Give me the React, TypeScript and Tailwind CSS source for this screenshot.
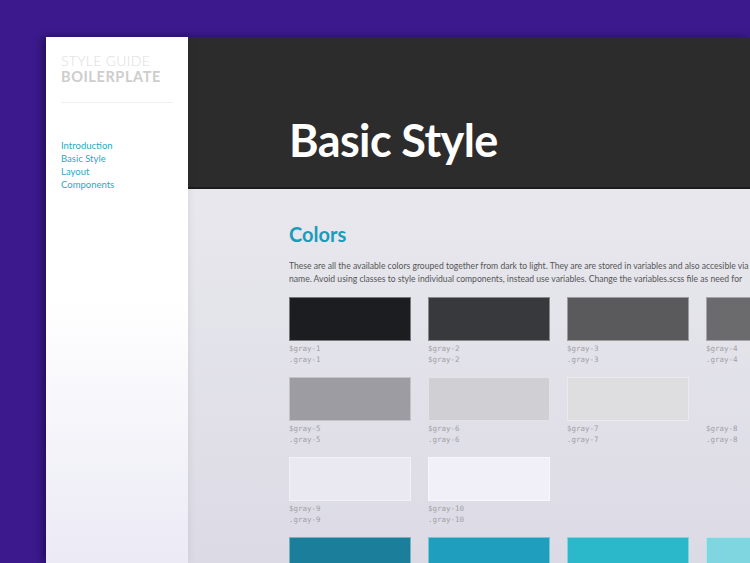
import React from 'react';

interface Swatch {
    name: string;
    cls: string;
    color: string | null;
}

const swatches: Swatch[] = [
    { name: '$gray-1', cls: '.gray-1', color: '#1c1d20' },
    { name: '$gray-2', cls: '$gray-2', color: '#38393c' },
    { name: '$gray-3', cls: '.gray-3', color: '#5a5a5d' },
    { name: '$gray-4', cls: '.gray-4', color: '#6b6b6e' },
    { name: '$gray-5', cls: '.gray-5', color: '#9d9ca3' },
    { name: '$gray-6', cls: '.gray-6', color: '#d0d0d4' },
    { name: '$gray-7', cls: '.gray-7', color: '#dedee1' },
    { name: '$gray-8', cls: '.gray-8', color: null },
    { name: '$gray-9', cls: '.gray-9', color: '#eae9f1' },
    { name: '$gray-10', cls: '.gray-10', color: '#f1f0f9' },
    { name: '', cls: '', color: null },
    { name: '', cls: '', color: null },
    { name: '', cls: '', color: '#1b7f9c' },
    { name: '', cls: '', color: '#1f9ebe' },
    { name: '', cls: '', color: '#2bb8ca' },
    { name: '', cls: '', color: '#7fd6e1' },
];

const navLinks = ['Introduction', 'Basic Style', 'Layout', 'Components'];

export default function App() {
    return (
        <div className="w-[750px] h-[563px] overflow-hidden bg-[#3c1a8d] pt-[37px] pl-[46px] font-['Lato',sans-serif]">
            <div className="flex h-[526px] shadow-[-4px_0_8px_rgba(10,0,40,0.45)]">
                {/* Sidebar */}
                <aside className="w-[142px] shrink-0 bg-gradient-to-b from-white via-white to-[#ebeaf5] pt-[16px] px-[15px] relative z-10 shadow-[2px_0_6px_rgba(0,0,0,0.06)]">
                    <div className="text-[14px] leading-[16px] text-[#dcdcdc] font-light tracking-[0.3px]">STYLE GUIDE</div>
                    <div className="text-[14.5px] leading-[16px] text-[#cdcdcd] font-bold tracking-[0.6px]">BOILERPLATE</div>
                    <div className="mt-[17px] border-t border-[#efefef]" />
                    <nav className="mt-[36px] flex flex-col">
                        {navLinks.map((link) => (
                            <a key={link} className="text-[9.5px] leading-[13px] text-[#2aa8c4]">{link}</a>
                        ))}
                    </nav>
                </aside>

                {/* Main */}
                <main className="flex-1 flex flex-col overflow-hidden bg-gradient-to-b from-[#ededf1] to-[#dcdbe5]">
                    <header className="h-[152px] shrink-0 bg-[#2c2c2c] border-b-2 border-[#1b1b1b] pl-[101px] pt-[80px]">
                        <h1 className="text-[45px] leading-[46px] font-bold text-white tracking-[-0.6px]">Basic Style</h1>
                    </header>

                    <section className="pl-[101px] pt-[34px] overflow-hidden">
                        <h2 className="text-[20px] leading-[22px] font-bold text-[#1b9bba]">Colors</h2>
                        <p className="mt-[15px] w-[460px] text-[8.6px] leading-[13px] text-[#555] whitespace-nowrap overflow-hidden">
                            These are all the available colors grouped together from dark to light. They are are stored in variables and also accesible via
                            <br />
                            name. Avoid using classes to style individual components, instead use variables. Change the variables.scss file as need for
                        </p>

                        <div className="mt-[11px] grid grid-cols-[repeat(4,122px)] gap-x-[17px] gap-y-[12px]">
                            {swatches.map((s, i) => (
                                <div key={i}>
                                    {s.color ? (
                                        <div
                                            className="h-[44px] border border-white/40"
                                            style={{ backgroundColor: s.color }}
                                        />
                                    ) : (
                                        <div className="h-[44px]" />
                                    )}
                                    {s.name && (
                                        <div className="mt-[2px] font-['DejaVu_Sans_Mono',monospace] text-[7.5px] leading-[11px] text-[#a0a0a5]">
                                            <div>{s.name}</div>
                                            <div>{s.cls}</div>
                                        </div>
                                    )}
                                </div>
                            ))}
                        </div>
                    </section>
                </main>
            </div>
        </div>
    );
}
